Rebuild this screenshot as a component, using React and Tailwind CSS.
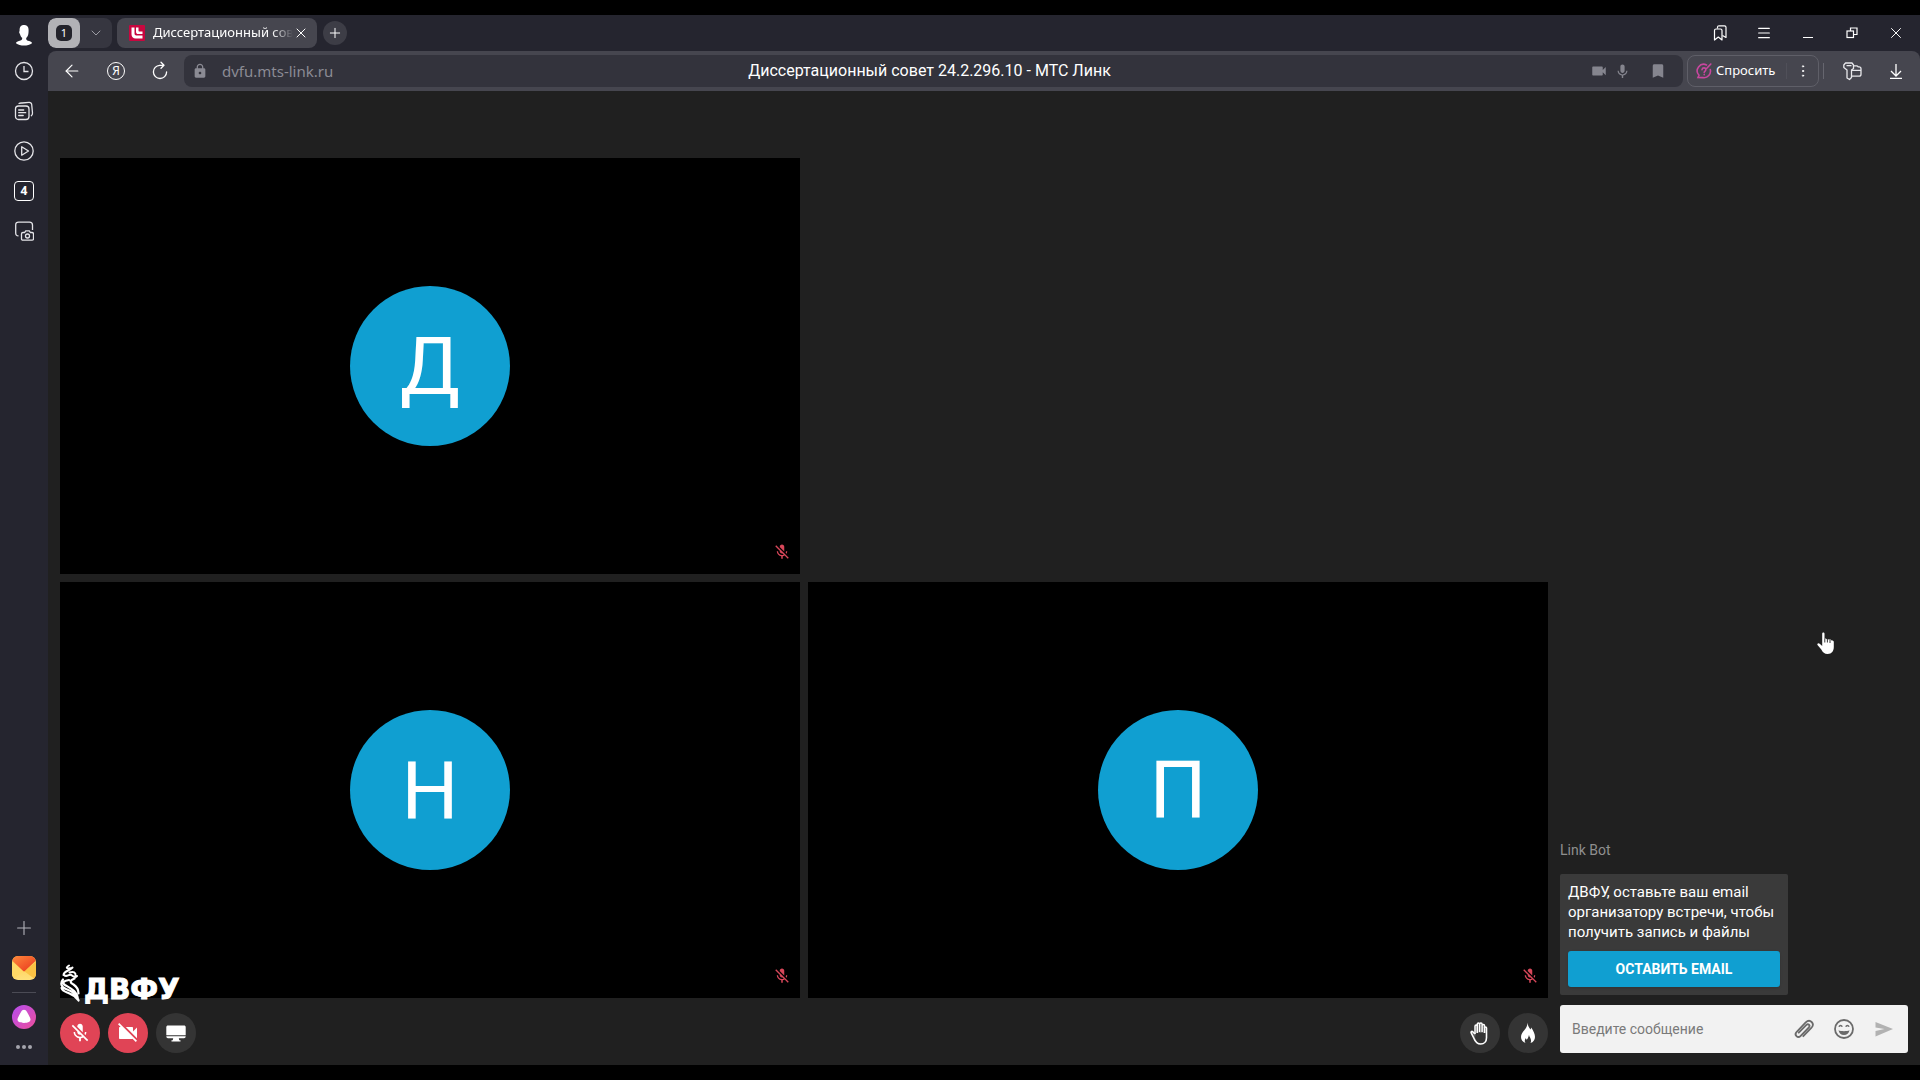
import { useState } from 'react';
import { Menu, X, Plus, ChevronDown, ArrowLeft, EllipsisVertical } from 'lucide-react';
import { MdMicOff, MdVideocamOff, MdVideocam, MdMic, MdBookmark, MdLock } from 'react-icons/md';

// ── Icons: browser ──────────────────────────────────────────

const IconProfile = () => (
  <svg className="w-5 h-6" viewBox="0 0 20 24" fill="#fff">
    <path d="M10.500 2C7 1.700 5.500 4 5.600 7.200c0 1.200-.5 1.400-.4 2.400.1.900.8 1.300 1.100 2.300.3 1.300 1.200 2.300 1.900 2.900.3 2-.9 2.600-3.300 3.200C3 18.500 2 19.200 2 20.200 4 22 7 22.500 10 22.500s6-.5 8-2.300c0-1-1-1.700-2.900-2.200-2.100-.5-3.200-1.100-2.900-3.100 1.400-1 2.200-3 2.300-5.400C15 5.500 14.300 2.300 10.500 2z" />
  </svg>
);

const IconHistory = () => (
  <svg className="w-5 h-5" viewBox="0 0 20 20" fill="none" stroke="#e4e4e8" strokeWidth={1.3}>
    <circle cx="10" cy="10" r="8.500" />
    <path d="M10 5v5.500h4.500" />
  </svg>
);

const IconCollections = () => (
  <svg className="w-5 h-5" viewBox="0 0 20 20" fill="none" stroke="#e4e4e8" strokeWidth={1.300} strokeLinecap="round">
    <rect x="1.500" y="5" width="13.500" height="13.500" rx="3" />
    <path d="M5 2.500C6 1.800 7 2 8 2l7-.7c1.700-.1 2.500.7 2.700 2.200l.8 8.500c.1 1.200-.3 2-1.200 2.700M4.700 9h5M4.700 11.700h7M4.700 14.500h4.500" />
  </svg>
);

const IconPlay = () => (
  <svg className="w-5 h-5" viewBox="0 0 20 20" fill="none" stroke="#e4e4e8" strokeWidth={1.300} strokeLinejoin="round">
    <circle cx="10" cy="10" r="9.200" />
    <path d="M7.700 5.800v8.400l6.800-4.200z" />
  </svg>
);

const IconScreenshot = () => (
  <svg className="w-5 h-5" viewBox="0 0 20 20" fill="none" stroke="#e4e4e8" strokeWidth={1.300} strokeLinejoin="round">
    <path d="M4.500 14.800C2.500 14.800 1.700 13.800 1.700 12V4c0-2 1-2.900 3-2.900h10.800c2 0 3 .9 3 2.900v5" />
    <path d="M9 11.500h1.700l1-1.700h3.600l1 1.700H18c1 0 1.500.5 1.500 1.500v4.700c0 1-.5 1.500-1.500 1.500H9c-1 0-1.500-.5-1.500-1.500V13c0-1 .5-1.500 1.500-1.500z" />
    <circle cx="13.500" cy="15" r="2" />
  </svg>
);

const IconMail = () => (
  <svg className="w-6 h-6" viewBox="0 0 24 24">
    <defs>
      <linearGradient id="mailFlap" x1="0" y1="0" x2="1" y2="1">
        <stop offset="0" stopColor="#ff8a3c" />
        <stop offset="1" stopColor="#e8331c" />
      </linearGradient>
      <linearGradient id="mailBody" x1="0" y1="0" x2="0" y2="1">
        <stop offset="0" stopColor="#ffc94d" />
        <stop offset="1" stopColor="#ffe07a" />
      </linearGradient>
      <clipPath id="mailClip"><rect width="24" height="24" rx="6" /></clipPath>
    </defs>
    <g clipPath="url(#mailClip)">
      <rect width="24" height="24" fill="url(#mailBody)" />
      <path d="M0 24V6l12 9z" fill="#ffd966" />
      <path d="M24 24V6l-12 9z" fill="#fbc244" />
      <path d="M2.500 0h19L24 4.500 12.800 15c-.5.500-1.100.5-1.600 0L0 4.500z" fill="url(#mailFlap)" />
    </g>
  </svg>
);

const IconAlice = () => (
  <svg className="w-6 h-6" viewBox="0 0 24 24">
    <defs>
      <linearGradient id="alice" x1="0" y1="0" x2="1" y2="1">
        <stop offset="0" stopColor="#b44df0" />
        <stop offset="1" stopColor="#ee4f9b" />
      </linearGradient>
    </defs>
    <circle cx="12" cy="12" r="12" fill="url(#alice)" />
    <path d="M12 4.800c1.300 0 2.200.8 3 2.100 1.200 1.900 2.500 4.300 3.300 6.500.9 2.600-.9 4.600-6.300 4.600s-7.200-2-6.300-4.600C6.500 11.200 7.800 8.800 9 6.900c.8-1.300 1.700-2.100 3-2.100z" fill="#fff" />
  </svg>
);

const IconMore = () => (
  <svg className="w-4 h-1" viewBox="0 0 16 4" fill="#a5a5ad">
    <circle cx="2" cy="2" r="2" />
    <circle cx="8" cy="2" r="2" />
    <circle cx="14" cy="2" r="2" />
  </svg>
);

const IconReload = () => (
  <svg className="w-5 h-5" viewBox="0 0 20 20" fill="none" stroke="#fff" strokeWidth={1.300} strokeLinecap="round" strokeLinejoin="round">
    <path d="M13.500 4.300H9.700A6.600 6.600 0 1 0 16.600 11M11 1.300l3 3-3 3" />
  </svg>
);

const IconFavicon = () => (
  <svg className="w-4 h-4 shrink-0" viewBox="0 0 16 16">
    <rect width="16" height="16" rx="1" fill="#c8073f" />
    <path d="M2.500 2.500h3v6c0 1.300.7 2 2 2h6v3H6.700c-2.700 0-4.200-1.500-4.200-4.200z" fill="#fff" />
    <path d="M7 2.500h2.500v3c0 .7.300 1 1 1h3V9H9.300C7.800 9 7 8.200 7 6.700z" fill="#fff" />
  </svg>
);

const IconBookmarks = () => (
  <svg className="w-4 h-4" viewBox="0 0 16 16" fill="none" stroke="#fff" strokeWidth={1.200} strokeLinejoin="round">
    <path d="M2.500 5.500c0-1 .5-1.500 1.500-1.500h4.500c1 0 1.500.5 1.500 1.500V15l-3.700-3-3.800 3z" />
    <path d="M5.500 3.500V2.300c0-1 .5-1.500 1.500-1.500h5.500c1 0 1.500.5 1.500 1.500v10.200l-3.500-2" />
  </svg>
);

const IconRestore = () => (
  <svg className="w-3 h-3" viewBox="0 0 12 12" fill="none" stroke="#fff" strokeWidth={1.200}>
    <rect x="1" y="4" width="6.500" height="6.500" />
    <path d="M4.500 4V1H11v6.500H7.500" />
  </svg>
);

const IconAsk = () => (
  <svg className="w-4 h-4 shrink-0" viewBox="0 0 16 16" fill="none" stroke="#c8479f" strokeWidth={1.600} strokeLinecap="round">
    <path d="M10.500 1.900A6.500 6.500 0 0 0 3 12.200L2 14.500l5 .1a6.500 6.500 0 0 0 7.300-8" />
    <path d="M14.800 1l-4 4.200M6 6.700c.2-1.200 1-1.800 2-1.800s1.900.7 1.900 1.700c0 1.400-1.700 1.500-1.700 3" />
    <path d="M8.200 11.600v.1" />
  </svg>
);

const IconPasswords = () => (
  <svg className="w-5 h-5" viewBox="0 0 20 20" fill="none" stroke="#e8e8ec" strokeWidth={1.300} strokeLinejoin="round">
    <path d="M3.500 2h6.500l1.500 2v3.500L9.500 9v7.500L7.500 18.500 5 17V9L1.800 6.500V4z" />
    <path d="M4.500 4.700h5M11.500 4.800h3.200c.8 0 1 .3 1.500 1h.8c1.300 0 2 .7 2 2v5.400c0 1.300-.7 2-2 2H9.600M9.500 9.300H19" />
  </svg>
);

const IconDownload = () => (
  <svg className="w-4 h-4" viewBox="0 0 16 16" fill="none" stroke="#fff" strokeWidth={1.300}>
    <path d="M8 1v12M3 8l5 5 5-5M2 15.300h12" />
  </svg>
);

// ── Icons: meeting ──────────────────────────────────────────

const IconHand = () => (
  <svg className="w-6 h-6" viewBox="0 0 24 24">
    <path d="M5.500 15.500L3.200 12c-.6-1.100.6-1.900 1.500-1.200L7 13V5c0-1.600 2.100-1.600 2.100 0 .2-.3.200-1.800.2-2 0-1.500 2.200-1.500 2.200 0 0-2 2.600-2 2.600 0v1.500c0-1.500 2.300-1.500 2.300 0V7c0-1.300 2-1.300 2 0v9c0 4-2.600 7-6 7-3.500 0-5.200-2.500-6.900-7.500z" fill="#5a5a5a" />
    <path d="M7 13V5.200c0-1.500 2.200-1.500 2.200 0V12M9.300 11V3c0-1.500 2.300-1.500 2.300 0v8M11.700 3c0-1.500 2.400-1.500 2.400 0v8M14.200 4.500c0-1.500 2.300-1.500 2.300 0V12" fill="none" stroke="#fff" strokeWidth="1.500" />
    <path d="M8 13.500V12h10v4.500c0 3.500-2 5.500-5.300 5.500-3.200 0-4.500-2-5.700-5.500z" fill="#343434" />
    <path d="M7 13l-2.300-2.300c-.9-.7-2.100.1-1.500 1.200L6 17.500C7.500 21.500 9.500 23 12.700 23c3.500 0 5.800-2.500 5.800-6.300V7c0-1.400-2-1.400-2 0" fill="none" stroke="#fff" strokeWidth="1.600" strokeLinejoin="round" />
  </svg>
);

const IconFire = () => (
  <svg className="w-6 h-6" viewBox="0 0 24 24" fill="#fff">
    <path d="M11.300 1.500c.6 3.300 1.700 5.100 3.200 7 .4-.5.600-1.200.7-2 2.300 3.300 3.800 6.600 3.800 9.500 0 3-1.800 5.300-4.500 6 .8-1.500.7-3.500-.3-5.200-.5-.9-1-1.700-1.200-3-.4 2.200-1 3.500-2.300 5-.4-.5-.7-1-.8-1.700-1.400 1.700-1.500 3.500-.4 4.900C6.800 21 5 18.800 5 16c0-3.200 1.700-4.700 3.500-7C10.300 6.700 11.500 4.500 11.300 1.500z" />
  </svg>
);

const IconScreen = () => (
  <svg className="w-5 h-5" viewBox="0 0 20 20" fill="#fff">
    <path d="M2 2.500h16c1 0 1.700.6 1.700 1.500v8.200H.3V4c0-.9.700-1.500 1.700-1.500z" />
    <path d="M.3 13.300h19.400c0 1.300-.7 2-1.700 2h-5.200l.5 2h1.200v1.200h-9v-1.200h1.200l.5-2H2c-1 0-1.700-.7-1.700-2z" />
  </svg>
);

const IconClip = () => (
  <svg className="w-6 h-6" viewBox="0 0 24 24" fill="none" stroke="#6b6b6b" strokeWidth={1.800} strokeLinecap="round">
    <path d="M7.300 14.700l7.600-7.800c1.800-1.800 4.200.6 2.500 2.400l-8.200 8.500c-3 3-7-.9-4-4l9-9.400c4.300-4.100 9.700 1.200 5.600 5.500l-8 8.300" transform="translate(-.5 1)" />
  </svg>
);

const IconSmile = () => (
  <svg className="w-6 h-6" viewBox="0 0 24 24" fill="#6b6b6b">
    <circle cx="12" cy="12" r="9" fill="none" stroke="#6b6b6b" strokeWidth="1.800" />
    <path d="M6.500 13.300c2.500 1.200 8.500 1.200 11 0-.5 3-2.600 4.700-5.500 4.700s-5-1.700-5.500-4.700z" />
    <path d="M7 9.700c.7-1.700 2.500-1.700 3.200 0M13.800 9.700c.7-1.700 2.500-1.700 3.200 0" fill="none" stroke="#6b6b6b" strokeWidth="1.600" />
  </svg>
);

const IconSend = () => (
  <svg className="w-5 h-5" viewBox="0 0 20 20" fill="#b2b2b2">
    <path d="M1.500 3L19 10 1.500 17.500V12l9-2-9-1.500z" />
  </svg>
);

const IconFlame = () => (
  <svg className="w-5 h-[38px]" viewBox="0 0 20 38" fill="none" stroke="#fff" strokeLinecap="round">
    <path d="M9 1.500C5.500 3.500 6.500 5 10 4.200M12.500 3.500C9 7.500 4 6.500 3.500 11M9.500 8.500c4-1.500 6.500 0 6 3M4 11c3 3 5-2 8 .5s4 1.500 5 .5" strokeWidth="2" />
    <path d="M9 16C3 17 2 19 5 21c5 3 12.500 6 13 15M14.500 14.500c-5 2-5 4-1 6 3 2 5 5 5 9M3 15.500C0 19 1 23 6 25c5 2 10 4 12.500 11M1.500 24c1 3.500 5 4 8 5.500 4 1.500 7 4 9 7" strokeWidth="2.200" />
  </svg>
);

const IconPointer = () => (
  <svg className="w-5 h-6" viewBox="0 0 20 24">
    <path d="M6.200 2.500c0-1.500 2.300-1.500 2.300 0v5.300c.5-.6 1.900-.4 2.200.4.600-.5 2-.3 2.300.6.700-.5 2.200-.1 2.500.8.900-.5 2.300 0 2.300 1.300V16c0 4-2 7-6.200 7-3.200 0-4.800-1.700-6.300-4.500L1.500 14c-.7-1.500 1-2.500 2.200-1.300l2.500 2.200z" fill="#fff" />
    <path d="M8.800 7.500v4M11.400 8v3.500M14 9v3" stroke="#202020" strokeWidth=".9" />
  </svg>
);

// ── Data ────────────────────────────────────────────────────

const PARTICIPANTS = [
  { letter: 'Д', place: 'col-start-1' },
  { letter: 'Н', place: 'col-start-1' },
  { letter: 'П', place: 'col-start-2' },
];

const SIDE_LINKS = [
  { label: 'История', icon: <IconHistory /> },
  { label: 'Коллекции', icon: <IconCollections /> },
  { label: 'Видео', icon: <IconPlay /> },
  {
    label: 'Вкладки',
    icon: <span className="size-5 rounded-[4px] border border-white flex items-center justify-center text-xs font-bold">4</span>,
  },
  { label: 'Скриншот', icon: <IconScreenshot /> },
];

// ── Browser chrome ──────────────────────────────────────────

const Sidebar = () => (
  <nav className="w-12 shrink-0 flex flex-col items-center bg-[#25252f] text-white">
    <button aria-label="Профиль" className="h-10 w-full flex items-center justify-center"><IconProfile /></button>
    <div className="-mt-1 w-full">
      {SIDE_LINKS.map(item => (
        <button key={item.label} aria-label={item.label} className="h-10 w-full flex items-center justify-center">
          {item.icon}
        </button>
      ))}
    </div>
    <div className="mt-auto w-full flex flex-col items-center pb-2">
      <button aria-label="Добавить" className="h-10 w-full flex items-center justify-center text-[#b4b4bc]">
        <Plus size={22} strokeWidth={1.2} />
      </button>
      <button aria-label="Почта" className="h-10 w-full flex items-center justify-center"><IconMail /></button>
      <div className="w-6 h-px my-1 bg-[#4b4b55]" />
      <button aria-label="Алиса" className="h-10 w-full flex items-center justify-center"><IconAlice /></button>
      <button aria-label="Ещё" className="h-5 w-full flex items-center justify-center"><IconMore /></button>
    </div>
  </nav>
);

const WindowButton = ({ label, children }) => (
  <button aria-label={label} className="w-11 h-full flex items-center justify-center text-white">{children}</button>
);

const TabBar = () => (
  <div className="h-9 shrink-0 flex items-center bg-[#25252f] pr-[2px] text-white">
    <div className="h-[30px] flex rounded-lg bg-[#363640] overflow-hidden">
      <button aria-label="Группа вкладок" className="w-8 flex items-center justify-center rounded-lg bg-[#b2b2b6]">
        <span className="size-4 flex items-center justify-center rounded-[5px] bg-[#24242c] text-[11px]">1</span>
      </button>
      <button aria-label="Список групп" className="w-8 flex items-center justify-center text-[#9b9ba3]">
        <ChevronDown size={16} strokeWidth={1.5} />
      </button>
    </div>
    <div className="ml-[5px] w-[200px] h-[30px] flex items-center rounded-lg bg-[#46464f] pl-3 pr-2">
      <IconFavicon />
      <span className="ml-2 flex-1 min-w-0 whitespace-nowrap text-[13px] mask-r-from-85%">
        Диссертационный сов
      </span>
      <button aria-label="Закрыть вкладку" className="shrink-0"><X size={16} strokeWidth={1.5} /></button>
    </div>
    <button aria-label="Новая вкладка" className="ml-[6px] size-6 rounded-full bg-[#3d3d46] flex items-center justify-center">
      <Plus size={16} strokeWidth={1.5} />
    </button>
    <div className="ml-auto h-full flex">
      <WindowButton label="Закладки"><IconBookmarks /></WindowButton>
      <WindowButton label="Меню"><Menu size={16} strokeWidth={1.8} /></WindowButton>
      <WindowButton label="Свернуть"><span className="w-[10px] h-px mt-2 bg-white" /></WindowButton>
      <WindowButton label="Восстановить"><IconRestore /></WindowButton>
      <WindowButton label="Закрыть"><X size={18} strokeWidth={1.3} /></WindowButton>
    </div>
  </div>
);

const AddressBar = () => (
  <div className="bg-[#25252f] shrink-0">
    <div className="h-10 flex items-center rounded-t-lg bg-[#46464f] pl-[2px] pr-[2px] text-white">
      <button aria-label="Назад" className="w-11 flex justify-center"><ArrowLeft size={20} strokeWidth={1.4} /></button>
      <button aria-label="Яндекс" className="w-11 flex justify-center">
        <span className="size-[18px] rounded-full border border-white flex items-center justify-center text-xs leading-none">Я</span>
      </button>
      <button aria-label="Обновить" className="w-11 flex justify-center"><IconReload /></button>
      <div className="ml-[2px] flex-1 h-8 grid grid-cols-[1fr_auto_1fr] items-center rounded-lg bg-[#33333c] pl-2 pr-4">
        <div className="flex items-center gap-[14px] text-[#8b8b94]">
          <MdLock size={16} />
          <span className="text-[15px]">dvfu.mts-link.ru</span>
        </div>
        <span className="text-base font-[Roboto,sans-serif]">Диссертационный совет 24.2.296.10 - МТС Линк</span>
        <div className="flex items-center justify-end text-[#85858e]">
          <MdVideocam size={18} />
          <MdMic size={17} className="ml-[6px]" />
          <MdBookmark size={18} className="ml-[18px]" />
        </div>
      </div>
      <div className="ml-1 h-8 w-[132px] flex items-center rounded-lg border border-[#5f5f68] pl-2">
        <button className="flex items-center gap-1 text-[13px]"><IconAsk />Спросить</button>
        <button aria-label="Ещё" className="ml-auto w-8 flex justify-center border-l border-[#505059]">
          <EllipsisVertical size={16} strokeWidth={1.5} />
        </button>
      </div>
      <div className="ml-1 w-px h-4 bg-[#66666f]" />
      <button aria-label="Пароли" className="ml-[6px] w-11 flex justify-center"><IconPasswords /></button>
      <button aria-label="Загрузки" className="w-11 flex justify-center"><IconDownload /></button>
    </div>
  </div>
);

// ── Meeting ─────────────────────────────────────────────────

const Tile = ({ letter, place }) => (
  <div className={`relative aspect-video bg-black flex items-center justify-center ${place}`}>
    <div className="size-40 rounded-full bg-[#109fd1] flex items-center justify-center pt-[2px] text-[80px] leading-none text-white">
      {letter}
    </div>
    <MdMicOff size={18} className="absolute right-[9px] bottom-[13px] text-[#d8475a]" />
  </div>
);

const RoundButton = ({ label, danger, children }) => (
  <button
    aria-label={label}
    className={`size-10 rounded-full flex items-center justify-center text-white ${danger ? 'bg-[#e04456]' : 'bg-[#343434]'}`}
  >
    {children}
  </button>
);

const Stage = () => (
  <main className="flex-1 min-w-0 flex flex-col justify-end pl-3 pb-3">
    <div className="relative">
      <div className="grid grid-cols-2 gap-2">
        {PARTICIPANTS.map(p => <Tile key={p.letter} {...p} />)}
      </div>
      {/* university logo over the lower left tile */}
      <div className="absolute left-0 -bottom-1 flex items-end text-white">
        <IconFlame />
        <span className="ml-1 text-[28px] leading-6 font-bold font-['DejaVu_Sans',sans-serif] [-webkit-text-stroke:1px_#fff]">
          ДВФУ
        </span>
      </div>
    </div>
    <div className="mt-[15px] flex gap-2">
      <RoundButton label="Включить микрофон" danger><MdMicOff size={22} /></RoundButton>
      <RoundButton label="Включить камеру" danger><MdVideocamOff size={24} /></RoundButton>
      <RoundButton label="Показать экран"><IconScreen /></RoundButton>
      <div className="ml-auto flex gap-2">
        <RoundButton label="Поднять руку"><IconHand /></RoundButton>
        <RoundButton label="Реакция"><IconFire /></RoundButton>
      </div>
    </div>
  </main>
);

const Chat = () => {
  const [message, setMessage] = useState('');

  return (
    <aside className="relative w-[372px] shrink-0 flex flex-col justify-end px-3 pb-3">
      <p className="text-sm leading-5 text-[#8f8f8f]">Link Bot</p>
      <div className="mt-[14px] w-[228px] rounded-[2px] bg-[#3a3a3a] p-2">
        <p className="text-[15px] leading-5 text-white">
          ДВФУ, оставьте ваш email организатору встречи, чтобы получить запись и файлы
        </p>
        <button className="mt-[9px] h-9 w-full rounded-[3px] bg-[#109fd1] text-sm font-bold text-white shadow">
          ОСТАВИТЬ EMAIL
        </button>
      </div>
      <form className="mt-[10px] h-12 flex items-center rounded-[3px] bg-[#f2f2f2] px-3" onSubmit={e => e.preventDefault()}>
        <input
          type="text"
          aria-label="Сообщение"
          placeholder="Введите сообщение"
          value={message}
          onChange={e => setMessage(e.target.value)}
          className="flex-1 min-w-0 bg-transparent text-sm text-[#333] placeholder:text-[#7a7a7a] outline-none"
        />
        <div className="flex items-center gap-4">
          <button type="button" aria-label="Прикрепить файл"><IconClip /></button>
          <button type="button" aria-label="Смайлики"><IconSmile /></button>
          <button type="submit" aria-label="Отправить" className="size-6 flex items-center justify-center"><IconSend /></button>
        </div>
      </form>
      <div className="absolute right-[84px] bottom-[410px]"><IconPointer /></div>
    </aside>
  );
};

// ── Page ────────────────────────────────────────────────────

const App = () => (
  <div className="min-h-screen flex flex-col bg-black py-[15px] font-['Noto_Sans',sans-serif]">
    <div className="flex-1 flex">
      <Sidebar />
      <div className="flex-1 min-w-0 flex flex-col bg-[#202020]">
        <TabBar />
        <AddressBar />
        <div className="flex-1 flex font-[Roboto,sans-serif]">
          <Stage />
          <Chat />
        </div>
      </div>
    </div>
  </div>
);

export default App;
